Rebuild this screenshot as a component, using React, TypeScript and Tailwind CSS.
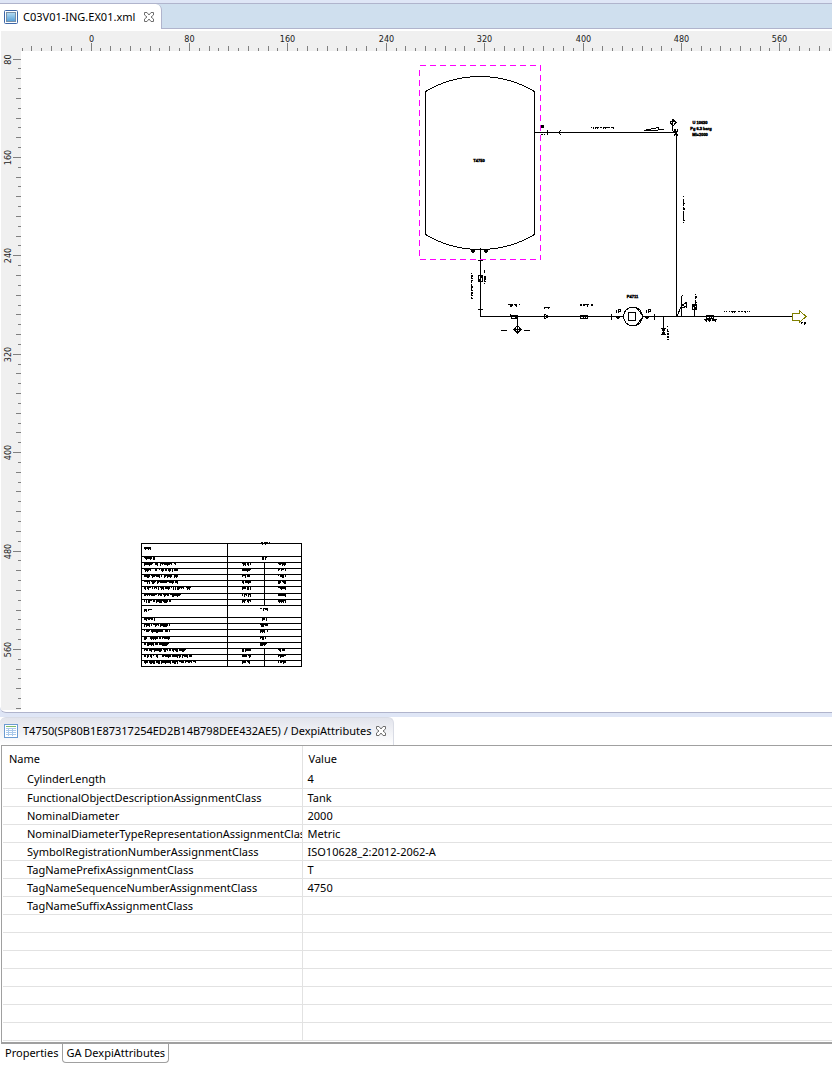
import React from "react";

const TICK_STEP = 9.84;

type Orientation = "horizontal" | "vertical";

/* Ruler with a long tick and a label for every 80 units, one tick per 8 units. */
function Ruler({
  orientation,
  origin,
  first,
  from,
  to,
}: {
  orientation: Orientation;
  origin: number;
  first: number;
  from: number;
  to: number;
}) {
  const horizontal = orientation === "horizontal";
  const items: React.ReactNode[] = [];
  for (let i = from; i <= to; i++) {
    const pos = Math.floor(origin + i * TICK_STEP) + 0.5;
    const mod = ((i % 10) + 10) % 10;
    const length = mod === 0 ? 8 : mod % 2 === 0 ? 5 : 3;
    items.push(
      <path
        key={`t${i}`}
        d={horizontal ? `M${pos} 20v-${length}` : `M20 ${pos}h-${length}`}
        stroke="#808080"
      />,
    );
    if (mod === 0) {
      items.push(
        <text
          key={`l${i}`}
          textAnchor="middle"
          fill="#202020"
          transform={horizontal ? `translate(${pos} 11)` : `translate(10 ${pos}) rotate(-90)`}
        >
          {first + i * 8}
        </text>,
      );
    }
  }
  return (
    <svg
      className={
        horizontal
          ? "block h-5 w-full bg-[#f0f0f0] text-[9px] [font-family:'DejaVu_Sans_Condensed','DejaVu_Sans',sans-serif]"
          : "block h-full w-5 bg-[#f0f0f0] text-[9px] [font-family:'DejaVu_Sans_Condensed','DejaVu_Sans',sans-serif]"
      }
      shapeRendering="crispEdges"
      aria-hidden="true"
    >
      {items}
    </svg>
  );
}

/* Annotation that is far below reading size at this zoom level: a run of small marks. */
function Marks({
  x,
  y,
  length,
  seed = 1,
  vertical = false,
  dense = false,
}: {
  x: number;
  y: number;
  length: number;
  seed?: number;
  vertical?: boolean;
  dense?: boolean;
}) {
  let state = (seed * 7919 + 13) % 65521;
  let d = "";
  for (let i = 0; i < length; i++) {
    state = (state * 17364 + 4321) % 65521;
    const r = (state >> 4) % 12;
    const main = i === 0 || r < (dense ? 10 : 9);
    const size = dense ? (r % 4 === 0 ? 3 : r % 2 === 1 ? 2 : 1) : r % 3 === 0 ? 2 : 1;
    if (main) {
      d += vertical
        ? `M${x} ${y + i}h${size}v1h-${size}z`
        : `M${x + i} ${y}h1v${size}h-1z`;
    }
  }
  return <path d={d} fill="#000" stroke="none" />;
}

const SHEET_ROWS = [543, 556, 562, 568, 574, 580, 586, 593, 599, 605, 617, 623, 629, 636, 642, 648, 654, 660, 666];
const SHEET_LABELS = [8, 11, 34, 34, 34, 34, 47, 37, 27, 8, 11, 26, 26, 26, 26, 42, 48, 52];

function DataSheet() {
  return (
    <g>
      <path
        d={SHEET_ROWS.map((y) => `M141 ${y + 0.5}H302`).join("")}
        stroke="#000"
      />
      <path d="M141.5 543V667M227.5 543V667M301.5 543V667M264.5 562V605M264.5 648V666" stroke="#000" />
      {SHEET_LABELS.map((length, i) => {
        const top = SHEET_ROWS[i];
        const tall = i === 0 || i === 9;
        const y = tall ? top + 4 : top + 2;
        const split = (i >= 2 && i <= 8) || i >= 15;
        return (
          <g key={i}>
            <Marks x={144} y={y - (tall ? 0 : 1)} length={length} seed={i + 3} dense />
            {split ? (
              <>
                <Marks x={242} y={y - 1} length={9} seed={i + 40} dense />
                <Marks x={278} y={y - 1} length={8} seed={i + 70} dense />
              </>
            ) : i === 0 ? (
              <Marks x={261} y={542} length={10} seed={9} dense />
            ) : (
              <Marks x={i === 1 || i === 10 ? 262 : 260} y={i === 9 ? top + 3 : y - 1} length={i === 1 || i === 10 ? 5 : 8} seed={i + 90} dense />
            )}
          </g>
        );
      })}
    </g>
  );
}

function Drawing() {
  return (
    <svg
      viewBox="21 51 811 659"
      className="block h-[659px] w-[811px] shrink-0 font-bold [font-family:'Liberation_Sans_Narrow','Liberation_Sans',sans-serif]"
      role="img"
      aria-label="Piping and instrumentation diagram"
      fill="none"
      stroke="#000"
      shapeRendering="crispEdges"
    >
      {/* tank */}
      <path d="M425.5 91.5A106.5 106.5 0 0 1 534.5 91.5V234.5A106.5 106.5 0 0 1 425.5 234.5Z" />
      <text x="479" y="162" textAnchor="middle" fontSize="4" fill="#000" stroke="#000" strokeWidth="0.4">T4750</text>
      <path d="M471 250h4v2h-1v1h-2v-1h-1zM484 250h4v2h-1v1h-2v-1h-1z" fill="#000" stroke="none" />

      {/* pipes */}
      <path d="M534 132.5H676.5V316.5M480.5 248V316.5H624M643 316.5H793" />
      <path d="M547.5 130V135M561 130L558.5 132.5L561 135M478 260.5H483M478 309.5H483M611.5 314V320M654.5 314V320" />
      <path d="M541 125h2v2h-2zM541 134h2M544 134h1" fill="#000" />
      <Marks x={591} y={127} length={25} seed={11} />
      <path d="M644 130.5L658 127.5V129.5H664M644 130.5H658" />
      <path d="M672.5 119V131M669.5 121.5H676M670 122L673 126L676 122.5L673 119.5" />
      <path d="M674 129.5L678 135.5M674 135.5L678 129.5M675.5 129V135M673 131.5H678" />
      <g fontSize="4" fill="#000" stroke="#000" strokeWidth="0.4" textAnchor="middle">
        <text x="700" y="124">U 10630</text>
        <text x="701" y="130">Pg 6.3 barg</text>
        <text x="700" y="136">MI=2000</text>
      </g>
      <Marks x={683} y={196} length={28} seed={17} vertical />

      {/* tank outlet */}
      <path d="M478.5 275.5h4v6h-4zM479 281L482 276" />
      <Marks x={471} y={273} length={26} seed={21} vertical />
      <Marks x={484} y={270} length={14} seed={22} vertical />

      {/* suction line */}
      <path d="M510.5 314.5L511.5 318.5H517.5V315.5H511M512 315L517 318M517.5 318V326" />
      <path d="M517.5 325.5L521 329.5L517.5 333L514 329.5zM514 329.5H521M517.5 326V333M501 330.5H507M524 330.5H530" />
      <Marks x={508} y={304} length={12} seed={31} dense />
      <path d="M544.5 314.5V318.5L549.5 316.5L544.5 314.5" />
      <Marks x={544} y={307} length={6} seed={33} />
      <path d="M580.5 315.5h7v3h-7zM583 316h2v2h-2z" />
      <Marks x={580} y={304} length={13} seed={35} dense />
      <path d="M616.5 309.5V313M618.5 313V309.5H620.5V311.5H619M616 317.5H620M617 318.5H619" />

      {/* pump */}
      <circle cx="633" cy="316.500" r="9.500" fill="#fff" />
      <path d="M628.5 312.5h7v8h-7zM636 307.5L643.5 316.5L636 325.5" />
      <text x="632.500" y="298" textAnchor="middle" fontSize="4" fill="#000" stroke="#000" strokeWidth="0.4">P4711</text>

      {/* discharge line */}
      <path d="M646.5 309.5V313M648.5 313V309.5H650.5V311.5H649M645 317.5H649M646 318.5H648" />
      <path d="M663.5 317V331" />
      <path d="M661.5 328.5L665.5 334.5H661.5L665.5 328.5zM663.5 329V335" />
      <Marks x={667} y={326} length={14} seed={43} vertical />
      <path d="M677 316L682 305L686.5 302.5V307L682 305M683 295L681.5 297V317M680 308L685 307" />
      <path d="M694.5 316V305M692.5 304.5h4v5h-4zM693 305L696 309" />
      <Marks x={695} y={294} length={12} seed={47} vertical />
      <path d="M706.5 315.5h7v3h-7zM709 316h2v2h-2z" />
      <Marks x={704} y={319} length={13} seed={49} dense />
      <Marks x={724} y={311} length={26} seed={51} />
      <path
        d="M792.5 313.5H799.5V310.5L806 316.5L799.5 322.5V320.5H792.5z"
        fill="#fff"
        stroke="#808000"
      />
      <Marks x={801} y={322} length={5} seed={53} dense />

      <DataSheet />

      {/* selection frame */}
      <rect x="419.500" y="65.500" width="121" height="194" stroke="#ff00ff" strokeDasharray="6 4" />
    </svg>
  );
}

function CloseIcon() {
  return (
    <svg width="12" height="12" viewBox="0 0 12 12" fill="#fff" stroke="#6e6e6e" aria-hidden="true">
      <path d="M1.5 1.5H4L6 4L8 1.500H10.500V4L8 6L10.500 8V10.500H8L6 8L4 10.500H1.500V8L4 6L1.500 4Z" />
    </svg>
  );
}

function DiagramIcon() {
  return (
    <svg width="14" height="14" viewBox="0 0 14 14" aria-hidden="true">
      <defs>
        <linearGradient id="screen" x1="0" y1="0" x2="0" y2="1">
          <stop offset="0" stopColor="#b5dcf3" />
          <stop offset="1" stopColor="#559fd8" />
        </linearGradient>
      </defs>
      <rect x="0.500" y="0.500" width="13" height="13" rx="1" fill="#fff" stroke="#3c66a8" />
      <rect x="2.500" y="2.500" width="9" height="9" fill="url(#screen)" stroke="#7790a8" />
    </svg>
  );
}

function TableIcon() {
  return (
    <svg width="14" height="14" viewBox="0 0 14 14" shapeRendering="crispEdges" aria-hidden="true">
      <rect x="0.500" y="0.500" width="13" height="13" fill="#fff" stroke="#6b9bd2" />
      <path d="M2 2.500H12" stroke="#7dbb6a" />
      <path d="M2 4.500H12M2 6.500H12M2 8.500H12M2 10.500H12M4.500 4V12M8.500 4V12" stroke="#a9c8ea" />
    </svg>
  );
}

const ATTRIBUTES: [string, string][] = [
  ["CylinderLength", "4"],
  ["FunctionalObjectDescriptionAssignmentClass", "Tank"],
  ["NominalDiameter", "2000"],
  ["NominalDiameterTypeRepresentationAssignmentClass", "Metric"],
  ["SymbolRegistrationNumberAssignmentClass", "ISO10628_2:2012-2062-A"],
  ["TagNamePrefixAssignmentClass", "T"],
  ["TagNameSequenceNumberAssignmentClass", "4750"],
  ["TagNameSuffixAssignmentClass", ""],
  ["", ""],
  ["", ""],
  ["", ""],
  ["", ""],
  ["", ""],
  ["", ""],
  ["", ""],
];

export default function App() {
  return (
    <div className="min-h-screen bg-white text-[11px] leading-4 text-black [font-family:'Noto_Sans','Open_Sans',sans-serif]">
      <section className="bg-[#dfe6f6] pt-[3px] pb-1">
        <div className="overflow-hidden rounded-bl-md border-b border-[#b0b4cc] bg-white">
          <div className="flex h-[26px] border-t border-[#b0b4cc] bg-[#cfdfee]">
            <div className="flex h-[25px] items-center rounded-tr-md border-r border-[#b0b4cc] bg-white pr-1.5 pl-1">
              <button type="button" className="flex items-center gap-[5px]">
                <DiagramIcon />
                <span>C03V01-ING.EX01.xml</span>
              </button>
              <button type="button" aria-label="Close C03V01-ING.EX01.xml" className="ml-2">
                <CloseIcon />
              </button>
            </div>
            <div className="flex-1 border-b border-[#b0b4cc]" />
          </div>
          <div className="mt-0.5 ml-px grid grid-cols-[20px_minmax(0,1fr)] grid-rows-[20px_auto]">
            <div className="bg-[#f0f0f0]" />
            <Ruler orientation="horizontal" origin={70} first={0} from={-7} to={75} />
            <Ruler orientation="vertical" origin={8} first={80} from={0} to={66} />
            <div className="overflow-hidden">
              <Drawing />
            </div>
          </div>
          <div className="h-0.5" />
        </div>
      </section>

      <section>
        <div className="flex h-7">
          <div className="flex items-center rounded-t-md border-t border-r border-[#d9dce5] bg-linear-to-b from-[#e2e4ec] to-white pr-1.5 pb-0.5 pl-1">
            <button type="button" className="flex items-center gap-[5px]">
              <TableIcon />
              <span>T4750(SP80B1E87317254ED2B14B798DEE432AE5) / DexpiAttributes</span>
            </button>
            <button type="button" aria-label="Close DexpiAttributes" className="ml-1">
              <CloseIcon />
            </button>
          </div>
        </div>
        <div className="ml-px border-t border-b-2 border-l border-[#a0a0a0] pb-px pl-px">
          <table className="w-full table-fixed border-collapse">
            <colgroup>
              <col className="w-[299px]" />
              <col />
            </colgroup>
            <thead>
              <tr className="h-6 text-left">
                <th className="border-r border-[#e2e2e2] pt-0.5 pb-0 pl-1.5 font-normal">Name</th>
                <th className="pt-0.5 pb-0 pl-1.5 font-normal">Value</th>
              </tr>
            </thead>
            <tbody>
              {ATTRIBUTES.map(([name, value], i) => (
                <tr key={i} className="h-[18px] border-b border-[#e2e2e2]">
                  <td className="overflow-hidden border-r border-[#e2e2e2] pt-px pb-0 pl-6 whitespace-nowrap">{name}</td>
                  <td className="pt-px pb-0 pl-[5px] whitespace-nowrap">{value}</td>
                </tr>
              ))}
            </tbody>
          </table>
        </div>
        <div className="flex h-5 items-start">
          <button type="button" className="h-[18px] pr-1 pl-[5px]">
            Properties
          </button>
          <button type="button" className="h-[19px] rounded-b-sm border border-t-0 border-[#a0a0a0] bg-white px-[3px]">
            GA DexpiAttributes
          </button>
        </div>
      </section>
    </div>
  );
}
